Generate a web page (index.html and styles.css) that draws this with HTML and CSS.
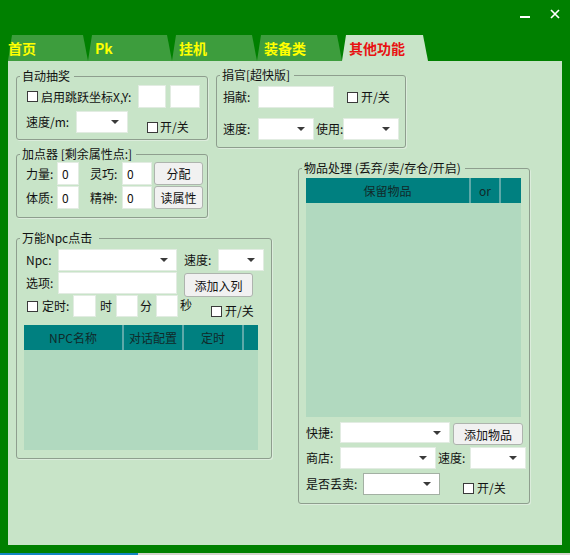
FILE: index.html
```html
<!DOCTYPE html>
<html lang="zh-CN">
<head>
<meta charset="utf-8">
<title>其他功能</title>
<link rel="stylesheet" href="styles.css">
</head>
<body>
<div class="window">
  <div class="titlebar">
    <svg class="ico" width="10" height="10" viewBox="0 0 10 10"><line x1="0" y1="8" x2="10" y2="8" stroke="#fff" stroke-width="2"/></svg>
    <svg class="ico" width="10" height="10" viewBox="0 0 10 10"><path d="M1 1L9 9M9 1L1 9" stroke="#fff" stroke-width="1.7" fill="none"/></svg>
  </div>
  <div class="tabs">
    <div class="tab t1">首页</div>
    <div class="tab t2">Pk</div>
    <div class="tab t3">挂机</div>
    <div class="tab t4">装备类</div>
    <div class="tab t5 active">其他功能</div>
  </div>
  <div class="panel">
    <div class="group g1">
      <span class="legend">自动抽奖</span>
      <div class="row h23">
        <span class="cb ml10"></span>
        <span class="lbl ml3 w97">启用跳跃坐标X,Y:</span>
        <span class="tb w28"></span>
        <span class="tb ml4 w30"></span>
      </div>
      <div class="row h22 mt3">
        <span class="lbl ml9 w50">速度/m:</span>
        <span class="combo w52"></span>
        <span class="cb ml19 end"></span>
        <span class="lbl ml2 end lo">开/关</span>
      </div>
    </div>

    <div class="group g3">
      <span class="legend">捐官[超快版]</span>
      <div class="row h22">
        <span class="lbl ml6 w35">捐献:</span>
        <span class="tb h22b w76"></span>
        <span class="cb ml13"></span>
        <span class="lbl ml3">开/关</span>
      </div>
      <div class="row h22 mt10">
        <span class="lbl ml6 w35">速度:</span>
        <span class="combo w56"></span>
        <span class="lbl ml2 w27">使用:</span>
        <span class="combo w56"></span>
      </div>
    </div>

    <div class="group g2">
      <span class="legend">加点器 [剩余属性点:]</span>
      <div class="row h23">
        <span class="lbl ml9 w31">力量:</span>
        <span class="tb w22">0</span>
        <span class="lbl ml11 w32">灵巧:</span>
        <span class="tb w30">0</span>
        <span class="btn ml2 w49">分配</span>
      </div>
      <div class="row h23 mt1">
        <span class="lbl ml9 w31">体质:</span>
        <span class="tb w22">0</span>
        <span class="lbl ml11 w32">精神:</span>
        <span class="tb w30">0</span>
        <span class="btn ml2 w49">读属性</span>
      </div>
    </div>

    <div class="group g4">
      <span class="legend lg4">万能Npc点击</span>
      <div class="row h22">
        <span class="lbl ml9 w32">Npc:</span>
        <span class="combo w119"></span>
        <span class="lbl ml7 w34">速度:</span>
        <span class="combo w46"></span>
      </div>
      <div class="row top h23 mt1">
        <span class="lbl ml9 w32 lh22">选项:</span>
        <span class="tb h22b w119"></span>
        <span class="btn ml7 w69 b24">添加入列</span>
      </div>
      <div class="row h22">
        <span class="cb ml10"></span>
        <span class="lbl ml4 w31">定时:</span>
        <span class="tb h22b w23"></span>
        <span class="lbl ml4 w16">时</span>
        <span class="tb h22b w22"></span>
        <span class="lbl ml2 w16">分</span>
        <span class="tb h22b w22"></span>
        <span class="lbl ml2 w31 up">秒</span>
        <span class="cb end"></span>
        <span class="lbl ml3 end lo">开/关</span>
      </div>
      <div class="tbl ml7 mt8 tbl4">
        <div class="thead">
          <span class="th c100">NPC名称</span>
          <span class="th c60">对话配置</span>
          <span class="th c60">定时</span>
          <span class="th last"></span>
        </div>
      </div>
    </div>

    <div class="group g5">
      <span class="legend">物品处理 (丢弃/卖/存仓/开启)</span>
      <div class="tbl ml7 tbl5">
        <div class="thead">
          <span class="th c165">保留物品</span>
          <span class="th c30">or</span>
          <span class="th last"></span>
        </div>
      </div>
      <div class="row top h23 mt5">
        <span class="lbl ml7 w34 lh21">快捷:</span>
        <span class="combo h21c w110"></span>
        <span class="btn ml3 w70 b22">添加物品</span>
      </div>
      <div class="row h22 mt2">
        <span class="lbl ml7 w34">商店:</span>
        <span class="combo w96"></span>
        <span class="lbl ml2 w32">速度:</span>
        <span class="combo w56"></span>
      </div>
      <div class="row h22 mt4">
        <span class="lbl ml7 w57">是否丢卖:</span>
        <span class="combo dark w77"></span>
        <span class="cb ml23 end mb1"></span>
        <span class="lbl ml3 end lo mb1">开/关</span>
      </div>
    </div>
  </div>
  <div class="desk"><span class="desk-blue"></span></div>
</div>
</body>
</html>
```

FILE: styles.css
```css
html, body {
  margin: 0;
  padding: 0;
}
body {
  width: 570px;
  height: 555px;
  overflow: hidden;
  background: #008000;
  font-family: "Noto Sans CJK SC", "Microsoft YaHei", sans-serif;
  font-size: 12px;
  color: #111;
}
.window {
  width: 570px;
  height: 555px;
  display: flex;
  flex-direction: column;
}
.titlebar {
  height: 35px;
  box-sizing: border-box;
  padding: 9px 10px 0 0;
  display: flex;
  justify-content: flex-end;
  align-items: flex-start;
  gap: 20px;
}
.ico { display: block; flex: none; }

.tabs {
  height: 26px;
  display: flex;
  padding-left: 8px;
}
.tab {
  position: relative;
  z-index: 0;
  box-sizing: border-box;
  height: 26px;
  line-height: 26px;
  font-size: 14px;
  font-weight: bold;
  color: #ffff00;
  white-space: nowrap;
  padding-left: 7px;
}
.tab::before {
  content: "";
  position: absolute;
  inset: 0;
  z-index: -1;
  background: #3d9d3d;
  clip-path: polygon(0 100%, 4px 0, calc(100% - 5px) 0, 100% 100%);
}
.t1 { width: 80px; padding-left: 0; }
.t2 { width: 84px; }
.t3 { width: 85px; }
.t4 { width: 85px; }
.t5 { width: 86px; }
.tab.active { color: #e81212; }
.tab.active::before { background: #c8e4c8; }

.panel {
  margin-left: 8px;
  width: 554px;
  height: 484px;
  box-sizing: border-box;
  padding: 14px 0 0 8px;
  background: #c8e4c8;
  display: grid;
  grid-template-columns: 192px 8px 56px 26px 108px 124px;
  grid-template-rows: 79px 84px auto;
  align-items: start;
}
.desk {
  margin-top: 8px;
  height: 2px;
  background: #d3d3cc;
  display: flex;
}
.desk-blue { width: 138px; background: #1485c2; }

.group {
  position: relative;
  box-sizing: border-box;
  border: 1px solid #8e9e8e;
  border-radius: 3px;
  box-shadow: 1px 1px 0 #dcecdc;
  display: flex;
  flex-direction: column;
}
.legend {
  position: absolute;
  top: -9px;
  left: 3px;
  padding: 0 4px 0 2px;
  line-height: 16px;
  background: #c8e4c8;
  white-space: nowrap;
}
.lg4 { padding-right: 7px; }
.g1 { grid-column: 1; grid-row: 1; margin-top: 1px; height: 64px; padding-top: 8px; }
.g2 { grid-column: 1; grid-row: 2; height: 64px; padding-top: 7px; }
.g3 { grid-column: 3 / 6; grid-row: 1; height: 73px; padding-top: 10px; }
.g4 { grid-column: 1 / 4; grid-row: 3; height: 221px; padding-top: 10px; }
.g5 { grid-column: 5 / 7; grid-row: 2 / 4; margin-top: 14px; height: 336px; padding-top: 9px; }

.row { display: flex; align-items: center; flex: none; }
.row.top { align-items: flex-start; }
.h22 { height: 22px; }
.h23 { height: 23px; }

.lbl { flex: none; white-space: nowrap; line-height: 16px; }
.lh22 { line-height: 22px; }
.lh21 { line-height: 21px; }
.lo { line-height: 12px; }
.up { align-self: flex-start; line-height: 22px; margin-top: -1px; }
.end { align-self: flex-end; }
.mb1 { margin-bottom: 1px; }

.tb {
  flex: none;
  box-sizing: border-box;
  height: 23px;
  line-height: 21px;
  padding-left: 4px;
  background: #fff;
  border: 1px solid #e2ece2;
}
.tb.h22b { height: 22px; line-height: 20px; }

.cb {
  flex: none;
  box-sizing: border-box;
  width: 11px;
  height: 11px;
  background: #fff;
  border: 1px solid #3a3a3a;
}

.combo {
  flex: none;
  box-sizing: border-box;
  height: 22px;
  background: #fff;
  border: 1px solid #e2ece2;
  display: flex;
  align-items: center;
  justify-content: flex-end;
  padding-right: 8px;
}
.combo::after {
  content: "";
  width: 0;
  height: 0;
  border-left: 4px solid transparent;
  border-right: 4px solid transparent;
  border-top: 4px solid #3a3a3a;
}
.combo.h21c { height: 21px; }
.combo.dark { border-color: #a3b0a3; }

.btn {
  flex: none;
  box-sizing: border-box;
  height: 23px;
  background: #f1f1f1;
  border: 1px solid #aeb4ae;
  border-radius: 3px;
  display: flex;
  align-items: center;
  justify-content: center;
  white-space: nowrap;
}
.btn.b24 { height: 24px; margin-top: 1px; margin-bottom: -2px; }
.btn.b22 { height: 22px; margin-top: 1px; }

.tbl {
  flex: none;
  box-sizing: border-box;
  background: #b1d9bf;
  display: flex;
  flex-direction: column;
}
.tbl4 { width: 234px; height: 125px; }
.tbl5 { width: 215px; height: 239px; }
.thead {
  height: 25px;
  background: #008080;
  display: flex;
}
.th {
  flex: none;
  box-sizing: border-box;
  display: flex;
  align-items: center;
  justify-content: center;
  border-right: 2px solid #5ea9a9;
  color: #102a2a;
  white-space: nowrap;
}
.th.last { flex: 1; border-right: none; }
.c100 { width: 100px; }
.c60 { width: 60px; }
.c165 { width: 165px; }
.c30 { width: 30px; }

.mt1 { margin-top: 1px; }
.mt2 { margin-top: 2px; }
.mt3 { margin-top: 3px; }
.mt4 { margin-top: 4px; }
.mt5 { margin-top: 5px; }
.mt8 { margin-top: 8px; }
.mt10 { margin-top: 10px; }
.ml2 { margin-left: 2px; }
.ml3 { margin-left: 3px; }
.ml4 { margin-left: 4px; }
.ml6 { margin-left: 6px; }
.ml7 { margin-left: 7px; }
.ml9 { margin-left: 9px; }
.ml10 { margin-left: 10px; }
.ml11 { margin-left: 11px; }
.ml13 { margin-left: 13px; }
.ml19 { margin-left: 19px; }
.ml23 { margin-left: 23px; }
.w16 { width: 16px; }
.w22 { width: 22px; }
.w23 { width: 23px; }
.w27 { width: 27px; }
.w28 { width: 28px; }
.w30 { width: 30px; }
.w31 { width: 31px; }
.w32 { width: 32px; }
.w34 { width: 34px; }
.w35 { width: 35px; }
.w46 { width: 46px; }
.w49 { width: 49px; }
.w50 { width: 50px; }
.w52 { width: 52px; }
.w56 { width: 56px; }
.w57 { width: 57px; }
.w69 { width: 69px; }
.w70 { width: 70px; }
.w76 { width: 76px; }
.w77 { width: 77px; }
.w96 { width: 96px; }
.w97 { width: 97px; }
.w110 { width: 110px; }
.w119 { width: 119px; }
```
